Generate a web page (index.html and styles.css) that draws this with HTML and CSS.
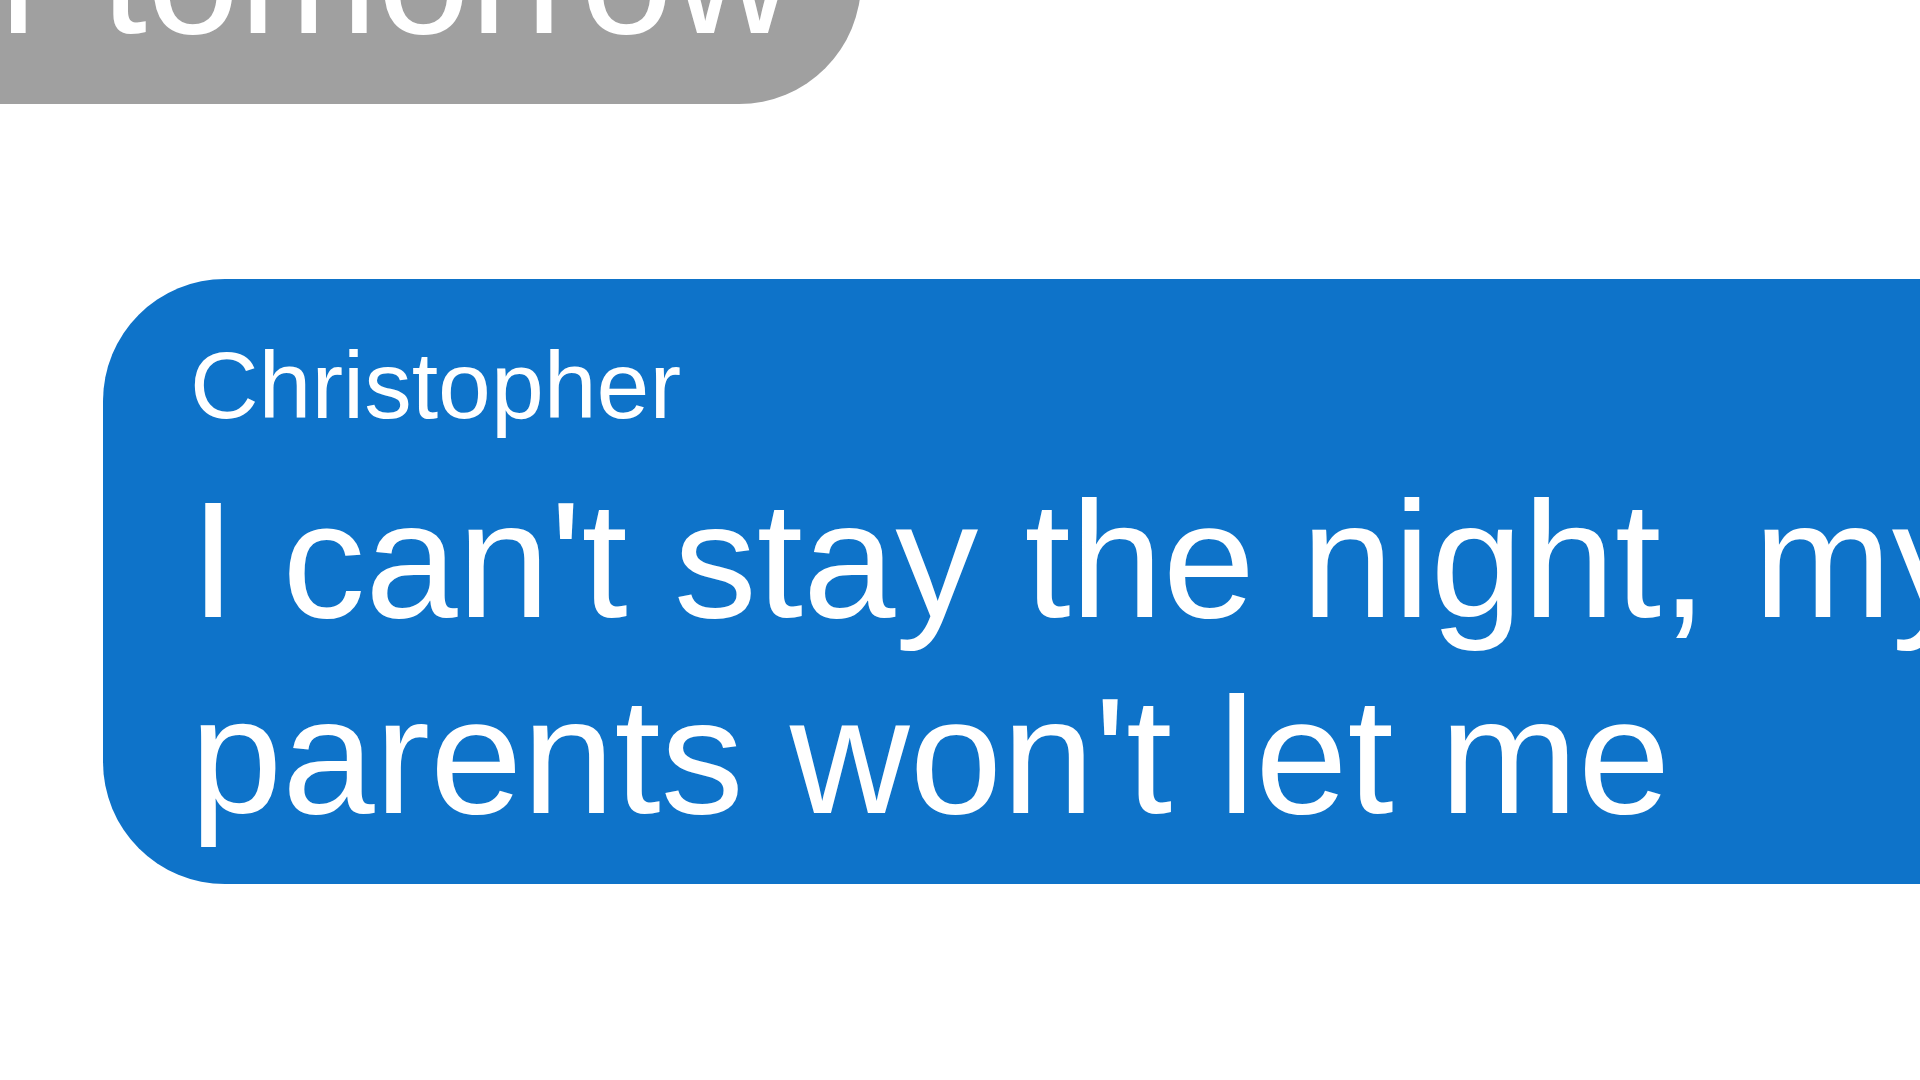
FILE: index.html
```html
<!DOCTYPE html>
<html>
  <head>
    <title>Messages</title>
    <link rel="stylesheet" href="styles.css">
  </head>
  <body>
    <div id="thread">
      <div class="bubble bubble-received">
        <div class="bubble-text">for tomorrow</div>
      </div>
      <div class="bubble bubble-sent">
        <div class="bubble-sender">Christopher</div>
        <div class="bubble-text">I can't stay the night, my parents won't let me</div>
      </div>
    </div>
  </body>
</html>
```

FILE: styles.css
```css
* {
  margin: 0;
  padding: 0;
  box-sizing: border-box;
}

html,
body {
  width: 1920px;
  height: 1080px;
  overflow: hidden;
}

body {
  font-family: "Liberation Sans", Arial, Helvetica, sans-serif;
  background-color: #ffffff;
  color: #ffffff;
}

#thread {
  display: flex;
  flex-direction: column;
  align-items: flex-start;
  gap: 175px;
  margin-top: -152px;
}

.bubble {
  border-radius: 122px;
  padding: 30px 68px 30px 99px;
}

.bubble-received {
  background-color: #a0a0a0;
  margin-left: -238px;
  border-top-left-radius: 0;
}

.bubble-sent {
  background-color: #0e73c9;
  margin-left: 103px;
  padding: 50px 0 30px 87px;
  width: 2000px;
}

.bubble-sender {
  font-size: 95px;
  line-height: 113px;
  margin-bottom: 20px;
}

.bubble-text {
  font-size: 166px;
  line-height: 196px;
  white-space: nowrap;
}

.bubble-sent .bubble-text {
  white-space: normal;
  width: 1800px;
}
```
